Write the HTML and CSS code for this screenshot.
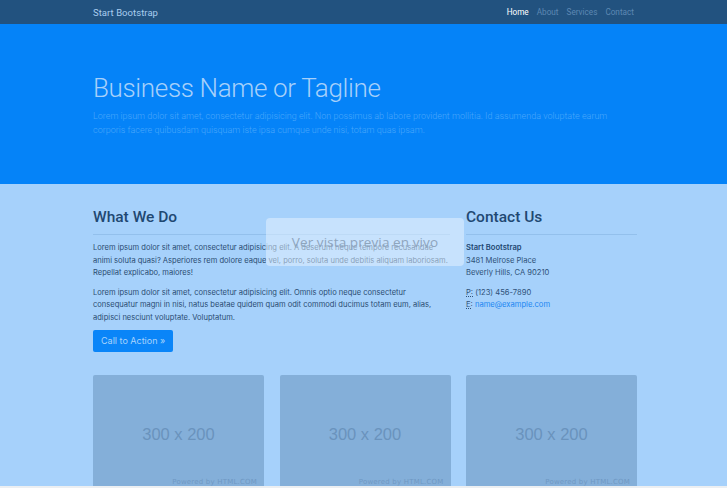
FILE: index.html
```html
<!DOCTYPE html>
<html>
<head>
<meta charset="utf-8">
<link rel="stylesheet" href="styles.css">
</head>
<body>
<div class="page">
  <nav class="navbar">
    <div class="container nav-inner">
      <span class="brand">Start Bootstrap</span>
      <ul class="nav-links">
        <li class="active">Home</li>
        <li>About</li>
        <li>Services</li>
        <li>Contact</li>
      </ul>
    </div>
  </nav>
  <header class="hero">
    <div class="container">
      <h1 class="hero-title">Business Name or Tagline</h1>
      <p class="hero-lead">Lorem ipsum dolor sit amet, consectetur adipisicing elit. Non possimus ab labore provident mollitia. Id assumenda voluptate earum corporis facere quibusdam quisquam iste ipsa cumque unde nisi, totam quas ipsam.</p>
    </div>
  </header>
  <main class="container content">
    <div class="row">
      <div class="col-main">
        <h2 class="sec-title">What We Do</h2>
        <hr class="rule">
        <p class="text">Lorem ipsum dolor sit amet, consectetur adipisicing elit. A deserunt neque tempore recusandae animi soluta quasi? Asperiores rem dolore eaque vel, porro, soluta unde debitis aliquam laboriosam. Repellat explicabo, maiores!</p>
        <p class="text">Lorem ipsum dolor sit amet, consectetur adipisicing elit. Omnis optio neque consectetur consequatur magni in nisi, natus beatae quidem quam odit commodi ducimus totam eum, alias, adipisci nesciunt voluptate. Voluptatum.</p>
        <span class="btn">Call to Action &raquo;</span>
      </div>
      <div class="col-side">
        <h2 class="sec-title">Contact Us</h2>
        <hr class="rule">
        <address class="addr">
          <strong>Start Bootstrap</strong><br>
          3481 Melrose Place<br>
          Beverly Hills, CA 90210
        </address>
        <address class="addr">
          <abbr>P:</abbr> (123) 456-7890<br>
          <abbr>E:</abbr> <span class="link">name@example.com</span>
        </address>
      </div>
    </div>
    <div class="cards">
      <div class="card"><span class="ph">300 x 200</span><span class="powered">Powered by HTML.COM</span></div>
      <div class="card"><span class="ph">300 x 200</span><span class="powered">Powered by HTML.COM</span></div>
      <div class="card"><span class="ph">300 x 200</span><span class="powered">Powered by HTML.COM</span></div>
    </div>
    <div class="preview">Ver vista previa en vivo</div>
  </main>
</div>
</body>
</html>
```
FILE: styles.css
```css
* { box-sizing: border-box; }
html, body { margin: 0; padding: 0; }
body {
  background: #eceff2;
  font-family: Roboto, "Liberation Sans", sans-serif;
  width: 727px;
  height: 488px;
  overflow: hidden;
}
.page {
  height: 486px;
  overflow: hidden;
  background: #a6d1fb;
}
.container {
  margin: 0 90px 0 93px;
}
.navbar {
  background: #22527f;
  height: 24px;
}
.nav-inner {
  display: flex;
  align-items: center;
  justify-content: space-between;
  height: 24px;
}
.brand {
  color: #a9cdef;
  font-size: 9.5px;
  letter-spacing: 0.05px;
}
.nav-links {
  list-style: none;
  margin: 0 3px 0 0;
  padding: 0;
  display: flex;
  gap: 8px;
  font-size: 8.2px;
  color: #5d88b3;
}
.nav-links .active { color: #ffffff; }
.hero {
  background: #0583f8;
  height: 160px;
  padding-top: 47px;
}
.hero-title {
  margin: 0;
  font-weight: 300;
  font-size: 26px;
  line-height: 34px;
  color: #a7d0fa;
  letter-spacing: -0.35px;
}
.hero-lead {
  margin: 4px 0 0;
  font-size: 9px;
  line-height: 14px;
  color: #4aa7fb;
  font-weight: 300;
  width: 530px;
}
.content {
  position: relative;
  padding-top: 22px;
}
.row {
  display: grid;
  grid-template-columns: 357px 171px;
  column-gap: 16px;
}
.sec-title {
  margin: 0;
  font-size: 15.5px;
  font-weight: 500;
  color: #1f4872;
  line-height: 22px;
}
.rule {
  border: 0;
  border-top: 1px solid #93c0ec;
  margin: 6px 0 7px;
}
.text {
  margin: 0 0 7px;
  width: 357px;
  font-size: 7.56px;
  line-height: 12.6px;
  color: #2a4c72;
  font-family: Inter, Roboto, sans-serif;
}
.btn {
  display: block;
  width: max-content;
  margin-top: -2px;
  background: #0a85f8;
  color: #a9d3fb;
  font-size: 9px;
  line-height: 22px;
  padding: 0 8px;
  border-radius: 2px;
  font-family: Inter, Roboto, sans-serif;
}
.addr {
  font-style: normal;
  font-size: 7.6px;
  line-height: 12.6px;
  color: #2f5279;
  margin: 0 0 7px;
  font-family: Inter, Roboto, sans-serif;
}
.addr strong { font-weight: 600; color: #1f4872; }
.addr abbr { text-decoration: underline dotted; }
.link { color: #1a86f2; }
.cards {
  display: grid;
  grid-template-columns: repeat(3, 171px);
  column-gap: 15.5px;
  margin-top: 23px;
}
.card {
  height: 114px;
  background: #84afd9;
  border-radius: 2px;
  position: relative;
  display: flex;
  align-items: center;
  justify-content: center;
}
.ph {
  color: #6a93bd;
  font-size: 16.5px;
  font-family: "Liberation Sans", Arial, sans-serif;
  margin-top: 5px;
}
.powered {
  position: absolute;
  right: 7px;
  bottom: 2px;
  font-size: 7px;
  line-height: 9px;
  color: #6f98c3;
  font-family: "DejaVu Sans", sans-serif;
  letter-spacing: 0.2px;
}
.preview {
  position: absolute;
  left: 173px;
  top: 34px;
  width: 198px;
  height: 48px;
  background: rgba(232, 243, 255, 0.5);
  border-radius: 4px;
  display: flex;
  align-items: center;
  justify-content: center;
  color: #8ea5bd;
  font-size: 13.5px;
  font-family: "Open Sans", sans-serif;
  font-weight: 400;
  letter-spacing: 0.1px;
}
```
